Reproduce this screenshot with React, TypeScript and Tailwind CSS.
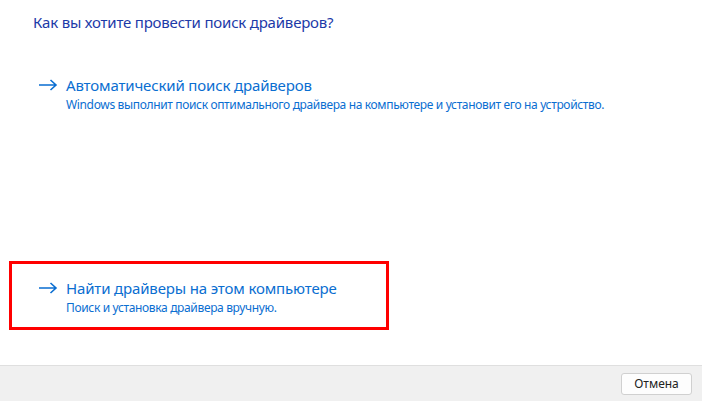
export default function App() {
  const font = { fontFamily: '"Segoe UI", "Noto Sans", sans-serif' };
  return (
    <div className="flex h-[401px] w-[702px] flex-col bg-white" style={font}>
      <div className="flex flex-1 flex-col">
        <h1 className="ml-[33px] mt-[12px] text-[15px] leading-[20px] font-normal tracking-[-0.2px] text-[#1c3aa8]">
          Как вы хотите провести поиск драйверов?
        </h1>

        <div className="ml-[38px] mt-[42px] flex flex-col">
          <div className="flex items-center gap-[8px]">
            <Arrow />
            <span className="text-[15px] leading-[22px] tracking-[-0.15px] text-[#0a6ed1]">Автоматический поиск драйверов</span>
          </div>
          <span className="ml-[28px] text-[12px] leading-[17px] tracking-[-0.35px] text-[#0a6ed1]">
            Windows выполнит поиск оптимального драйвера на компьютере и установит его на устройство.
          </span>
        </div>

        <div className="ml-[9px] mt-[148px] h-[69px] w-[380px] border-[3px] border-[#ff0000] pl-[26px] pt-[13px]">
          <div className="flex items-center gap-[8px]">
            <Arrow />
            <span className="text-[15px] leading-[22px] tracking-[-0.15px] text-[#0a6ed1]">Найти драйверы на этом компьютере</span>
          </div>
          <span className="ml-[28px] block text-[12px] leading-[17px] tracking-[-0.35px] text-[#0a6ed1]">
            Поиск и установка драйвера вручную.
          </span>
        </div>
      </div>

      <div className="flex h-[36px] items-center justify-end border-t border-[#dfdfdf] bg-[#f0f0f0] pr-[10px]">
        <button className="h-[22px] w-[71px] rounded-[3px] border border-[#d0d0d0] bg-[#fdfdfd] text-[12px] text-[#222]">
          Отмена
        </button>
      </div>
    </div>
  );
}

function Arrow() {
  return (
    <svg width="20" height="12" viewBox="0 0 20 12" className="shrink-0">
      <path d="M1 6h17M12.5 1l5.5 5-5.5 5" fill="none" stroke="#0a6ed1" strokeWidth="1.6" />
    </svg>
  );
}
